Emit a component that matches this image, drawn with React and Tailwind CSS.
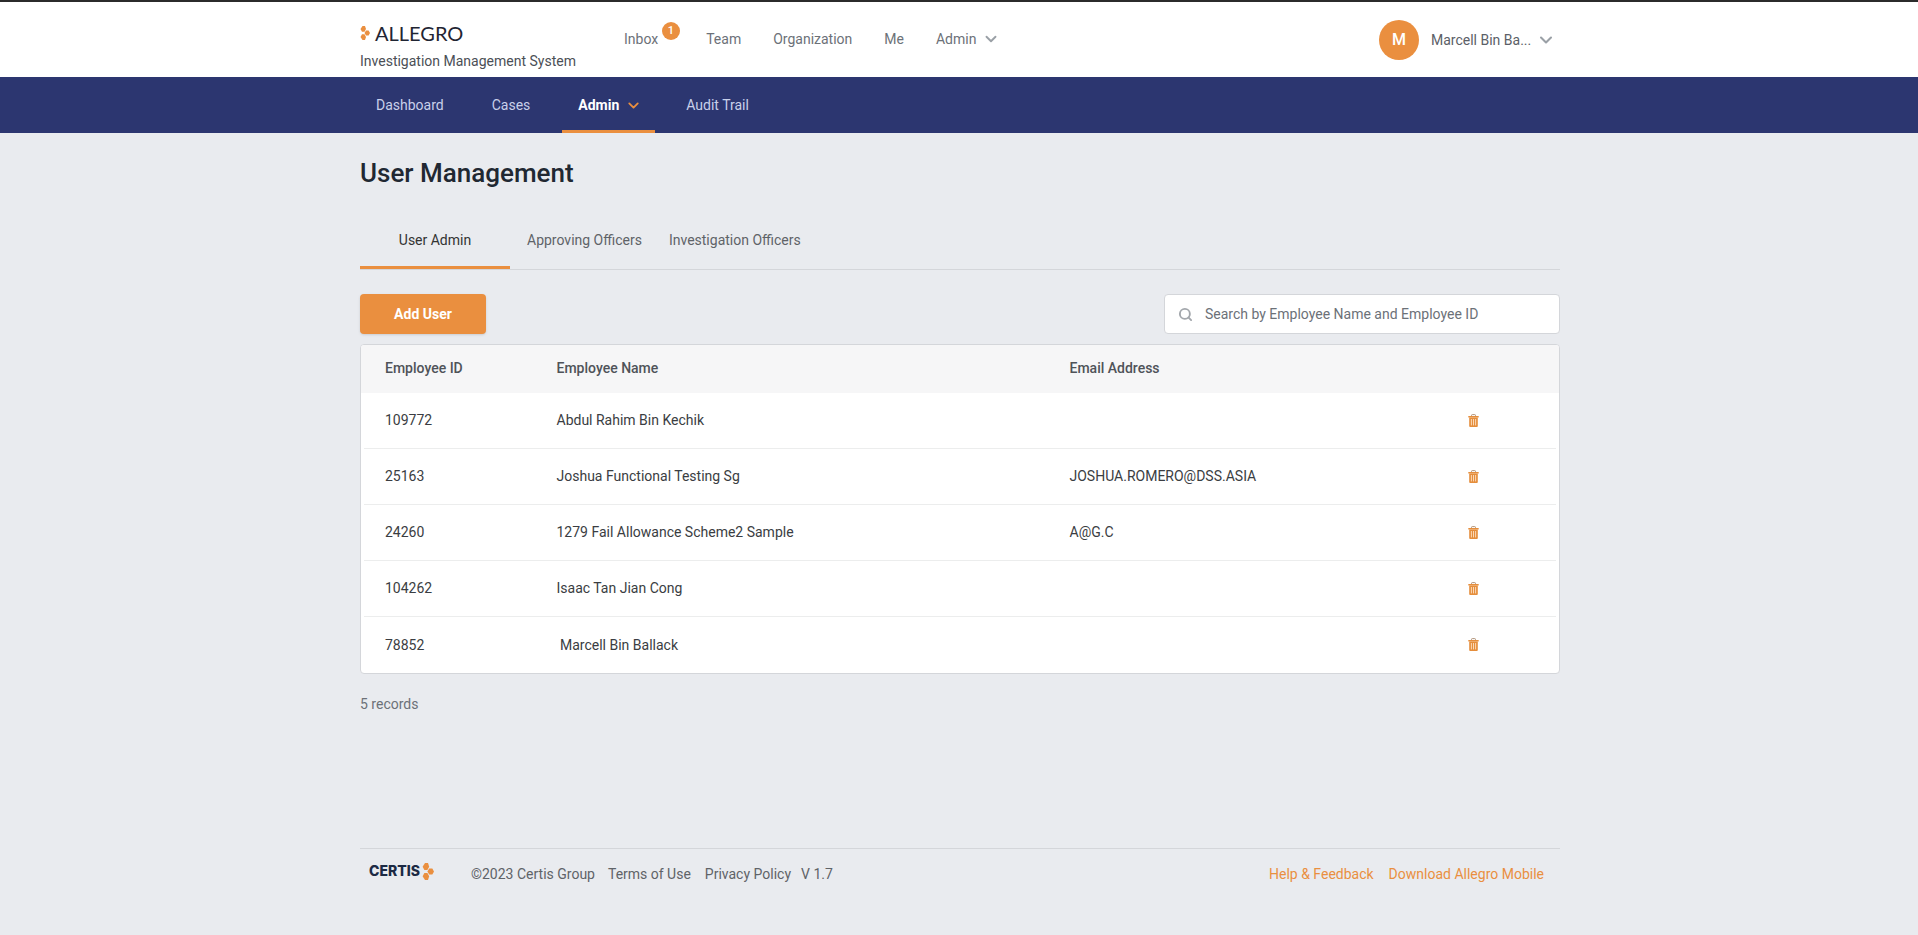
import React from "react";
import { ChevronDown, Search } from "lucide-react";

const Mark = ({ className }) => (
  <svg viewBox="0 0 10 14" className={className} fill="#ea8f3f">
    <path d="M0.5 3 L2.5 0 L5 0 L6 3 L4.5 5.8 L2 5.8 Z" />
    <path d="M4.5 7 L6 4.4 L8.6 4.4 L10 7 L8.6 9.6 L6 9.6 Z" />
    <path d="M0.5 11 L2 8.2 L4.5 8.2 L6 11 L5 14 L2.5 14 Z" />
  </svg>
);

const Trash = () => (
  <svg viewBox="0 0 11 13" className="h-[13px] w-[11px]">
    <path d="M3.5 2.2 V1.4 Q3.5 0.6 4.3 0.6 H6.7 Q7.5 0.6 7.5 1.4 V2.2" fill="none" stroke="#a8876a" strokeWidth="0.9" />
    <rect x="0.3" y="2" width="10.4" height="1.5" fill="#e58e3c" />
    <path d="M1.2 3.5 H9.8 V12 Q9.8 13 8.8 13 H2.2 Q1.2 13 1.2 12 Z" fill="#e58e3c" />
    <path d="M3.4 5 V11.4 M5.5 5 V11.4 M7.6 5 V11.4" stroke="#fbd9b8" strokeWidth="1" />
  </svg>
);

const rows = [
  ["109772", "Abdul Rahim Bin Kechik", ""],
  ["25163", "Joshua Functional Testing Sg", "JOSHUA.ROMERO@DSS.ASIA"],
  ["24260", "1279 Fail Allowance Scheme2 Sample", "A@G.C"],
  ["104262", "Isaac Tan Jian Cong", ""],
  ["78852", "\u00A0Marcell Bin Ballack", ""],
];

export default function App() {
  return (
    <div className="flex min-h-[935px] flex-col bg-[#e9ebef] font-['Roboto',sans-serif] text-sm text-[#3a3d42]">
      <header className="h-[77px] border-t-2 border-[#2b2b2b] bg-white">
        <div className="ml-[360px] flex w-[1200px] items-center">
          <div className="w-[264px]">
            <div className="mt-[15px] flex h-[32px] items-center gap-[5px]">
              <Mark className="h-[16px] w-[10px]" />
              <span className="font-['Lato',sans-serif] text-[20px] leading-none text-[#1f2533]">ALLEGRO</span>
            </div>
            <div className="mt-[2px] text-[14px] leading-5 text-[#4b4f56]">Investigation Management System</div>
          </div>
          <nav className="mt-[4px] flex items-center text-[14px] text-[#6c7178]">
            <span className="relative mr-[48px]">
              Inbox
              <span className="absolute left-[38px] top-[-7px] flex h-[18px] w-[18px] items-center justify-center rounded-full bg-[#ea8f3f] text-[11px] font-medium text-white">1</span>
            </span>
            <span className="mr-[32px]">Team</span>
            <span className="mr-[32px]">Organization</span>
            <span className="mr-[32px]">Me</span>
            <span className="flex items-center gap-[6px]">
              Admin
              <ChevronDown className="size-[18px] text-[#9aa0a6]" strokeWidth={2.5} />
            </span>
          </nav>
          <div className="ml-auto mt-[7px] mr-[4px] flex items-center">
            <div className="flex size-[40px] items-center justify-center rounded-full bg-[#ea8f3f] text-[16px] font-medium text-white">M</div>
            <span className="ml-[12px] w-[100px] whitespace-nowrap text-[14px] text-[#5b6067]">Marcell Bin Ba...</span>
            <ChevronDown className="ml-[5px] size-[20px] text-[#9aa0a6]" strokeWidth={2.5} />
          </div>
        </div>
      </header>

      <div className="h-[56px] bg-[#2c3670]">
        <div className="ml-[360px] flex h-full w-[1200px] text-[14px] text-[#c9d0ea]">
          <span className="flex items-center pl-[16px] pr-[24px]">Dashboard</span>
          <span className="flex items-center pl-[24px] pr-[32px]">Cases</span>
          <span className="flex items-center gap-[6px] border-b-[3px] border-[#ea8f3f] pl-[16px] pr-[13px] pt-[3px] font-bold text-white">
            Admin
            <ChevronDown className="size-[17px] text-[#ea8f3f]" strokeWidth={2.5} />
          </span>
          <span className="flex items-center px-[31px]">Audit Trail</span>
        </div>
      </div>

      <main className="ml-[360px] flex w-[1200px] flex-1 flex-col">
        <h1 className="mt-[24px] text-[26px] font-medium leading-8 text-[#212832]">User Management</h1>

        <div className="mt-[23px] flex h-[58px] border-b border-[#d4d6da] text-[14px] text-[#5f6368]">
          <span className="flex w-[150px] items-center justify-center border-b-[3px] border-[#ea8f3f] pt-[2px] text-[#333]">User Admin</span>
          <span className="ml-[17px] flex items-center pb-[1px]">Approving Officers</span>
          <span className="ml-[27px] flex items-center pb-[1px]">Investigation Officers</span>
        </div>

        <div className="mt-[24px] flex h-[40px] items-stretch justify-between">
          <button className="w-[126px] rounded bg-[#ea8f3f] text-[14px] font-bold text-white shadow-sm">Add User</button>
          <div className="flex w-[396px] items-center rounded border border-[#d4d6da] bg-white pl-[13px]">
            <Search className="size-[15px] text-[#a3a7ac]" strokeWidth={3} />
            <span className="ml-[12px] text-[14px] text-[#6c7178]">Search by Employee Name and Employee ID</span>
          </div>
        </div>

        <div className="mt-[10px] overflow-hidden rounded border border-[#d4d6da] bg-white">
          <div className="flex h-[48px] items-center bg-[#f6f6f7] pb-[2px] font-medium text-[#4f5359]">
            <span className="ml-[24px] w-[171.5px]">Employee ID</span>
            <span className="w-[513px]">Employee Name</span>
            <span>Email Address</span>
          </div>
          {rows.map((r, i) => (
            <div key={r[0]} className={i < rows.length - 1 ? "mx-[3px] flex h-[56px] items-center border-b border-[#eceded] pb-[1px]" : "mx-[3px] flex h-[56px] items-center pb-[1px]"}>
              <span className="ml-[21px] w-[171.5px]">{r[0]}</span>
              <span className="w-[513px] whitespace-pre">{r[1]}</span>
              <span className="w-[398px]">{r[2]}</span>
              <Trash />
            </div>
          ))}
        </div>

        <div className="mt-[20px] text-[14px] text-[#6c7178]">5 records</div>

        <footer className="mb-[51px] mt-auto flex h-[36px] items-end border-t border-[#d4d6da] text-[14px] text-[#5f6368]">
          <div className="mb-[3px] ml-[9px] flex h-[20px] w-[102px] items-center gap-[2px]">
            <span className="font-['Inter',sans-serif] text-[14px] font-extrabold text-[#1c2a44]">CERTIS</span>
            <Mark className="h-[17px] w-[12px]" />
          </div>
          <span>©2023 Certis Group</span>
          <span className="ml-[13px]">Terms of Use</span>
          <span className="ml-[14px]">Privacy Policy</span>
          <span className="ml-[10px]">V 1.7</span>
          <span className="ml-auto text-[#ea8f3f]">Help &amp; Feedback</span>
          <span className="ml-[15px] mr-[16px] text-[#ea8f3f]">Download Allegro Mobile</span>
        </footer>
      </main>
    </div>
  );
}
